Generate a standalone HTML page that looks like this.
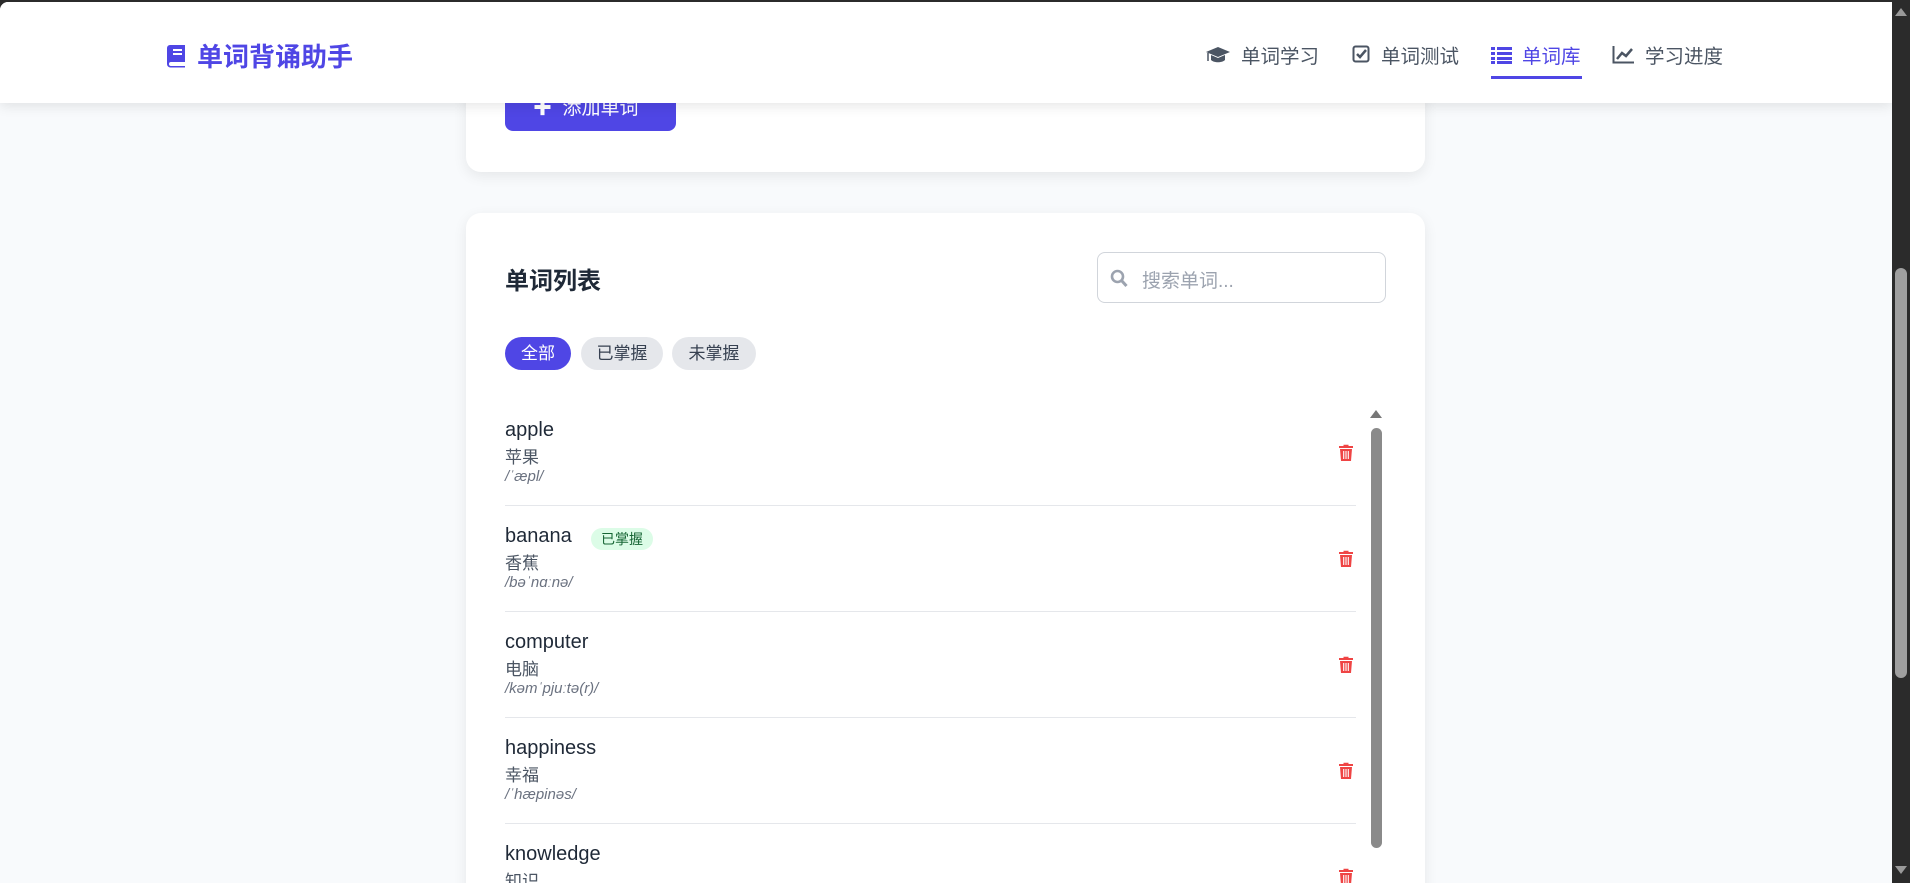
<!DOCTYPE html>
<html><head><meta charset="utf-8"><style>
*{box-sizing:border-box;margin:0;padding:0}
html,body{overflow:hidden}
body{width:1910px;height:883px;background:#2b2b2b;font-family:"Liberation Sans","Noto Sans CJK SC",sans-serif;position:relative}
#page{position:absolute;left:0;top:2px;width:1892px;height:881px;background:#f8fafc;overflow:hidden;border-top-left-radius:8px}
.abs{position:absolute}
.card{position:absolute;background:#fff;border-radius:15px;box-shadow:0 4px 14px rgba(0,0,0,0.08)}
header{position:absolute;left:0;top:0;width:1892px;height:101px;background:#fff;box-shadow:0 3px 12px rgba(0,0,0,0.1);z-index:5}
.logo{position:absolute;left:165px;top:35px;font-size:26px;font-weight:bold;color:#4f46e5;display:flex;align-items:center;gap:10px}
.nav{position:absolute;top:38px;font-size:19.5px;color:#4b5563;display:flex;align-items:center;gap:10px;white-space:nowrap}
.nav.active{color:#4f46e5}
.pill{position:absolute;top:335px;height:33px;border-radius:17px;font-size:17px;line-height:33px;text-align:center;color:#374151;background:#e5e7eb}
.row{position:absolute;left:505px;width:851px;height:106px;border-bottom:1px solid #e5e7eb}
.w{position:absolute;left:0;top:19px;font-size:20px;color:#1f2937}
.m{position:absolute;left:0;top:43px;font-size:17px;color:#4b5563}
.p{position:absolute;left:0;top:68px;font-size:15px;color:#6b7280;font-style:italic}
.tr{position:absolute;left:834px;top:44px}
</style></head><body>
<div id="page">
<header>
 <div class="logo"><svg width="22" height="24" viewBox="0 0 22 24"><path d="M5 1h15v17H6a2 2 0 0 0 0 4h14v1.5H5.5A3.5 3.5 0 0 1 2 20V4a3 3 0 0 1 3-3z" fill="#4f46e5"/><rect x="8" y="5" width="9" height="2" fill="#fff"/><rect x="8" y="9" width="9" height="2" fill="#fff"/></svg>单词背诵助手</div>
 <div class="nav" style="left:1205px"><svg width="26" height="20" viewBox="0 0 26 20"><path d="M13 2 1 7l12 5 12-5z" fill="#4b5563"/><path d="M6 10v5c3 3 11 3 14 0v-5l-7 3z" fill="#4b5563"/><path d="M3 8v8" stroke="#4b5563" stroke-width="1.5"/></svg>单词学习</div>
 <div class="nav" style="left:1352px"><svg width="19" height="19" viewBox="0 0 19 19"><rect x="1.5" y="1.5" width="15" height="15" rx="2" fill="none" stroke="#4b5563" stroke-width="2"/><path d="M5 9l3 3 6-7" fill="none" stroke="#4b5563" stroke-width="2.5"/></svg>单词测试</div>
 <div class="nav active" style="left:1491px"><svg width="21" height="18" viewBox="0 0 21 18"><g fill="#4f46e5"><rect x="0" y="1" width="4" height="3"/><rect x="6" y="1" width="15" height="3"/><rect x="0" y="6" width="4" height="3"/><rect x="6" y="6" width="15" height="3"/><rect x="0" y="11" width="4" height="3"/><rect x="6" y="11" width="15" height="3"/><rect x="0" y="15" width="4" height="3"/><rect x="6" y="15" width="15" height="3"/></g></svg>单词库</div>
 <div class="abs" style="left:1491px;top:74px;width:91px;height:3px;background:#4f46e5"></div>
 <div class="nav" style="left:1612px"><svg width="23" height="19" viewBox="0 0 23 19"><path d="M1.5 1v16.5H22" fill="none" stroke="#4b5563" stroke-width="2"/><path d="M5 14l5-6 4 3 6-7" fill="none" stroke="#4b5563" stroke-width="2.5"/></svg>学习进度</div>
</header>

<div class="card" style="left:466px;top:-40px;width:959px;height:210px">
 <div class="abs" style="left:39px;top:124px;width:171px;height:45px;background:#4f46e5;border-radius:8px;color:#fff;font-size:19px;line-height:45px;padding-left:28px">✚&nbsp;&nbsp;添加单词</div>
</div>

<div class="card" style="left:466px;top:211px;width:959px;height:720px">
 <div class="abs" style="left:39px;top:48px;font-size:24px;font-weight:bold;color:#1f2937">单词列表</div>
 <div class="abs" style="left:631px;top:39px;width:289px;height:51px;border:1px solid #d1d5db;border-radius:8px">
  <svg class="abs" style="left:12px;top:16px" width="18" height="19" viewBox="0 0 18 19"><circle cx="7.5" cy="7.5" r="5.5" fill="none" stroke="#9ca3af" stroke-width="2.6"/><path d="M11.5 11.5l5 5.5" stroke="#9ca3af" stroke-width="3"/></svg>
  <div class="abs" style="left:44px;top:13px;font-size:19px;color:#9ca3af">搜索单词...</div>
 </div>
</div>
<div class="pill" style="left:505px;width:66px;background:#4f46e5;color:#fff">全部</div>
<div class="pill" style="left:581px;width:82px">已掌握</div>
<div class="pill" style="left:672px;width:84px">未掌握</div>

<div class="abs" style="left:1370px;top:408px;width:0;height:0;border-left:6px solid transparent;border-right:6px solid transparent;border-bottom:8px solid #777"></div>
<div class="abs" style="left:1371px;top:426px;width:11px;height:420px;background:#8a8a8a;border-radius:6px"></div>

<div class="row" style="top:398px"><div class="w">apple</div><div class="m">苹果</div><div class="p">/ˈæpl/</div><svg class="tr" width="14" height="17" viewBox="0 0 14 17"><path d="M4.5 2V0.8h5V2H14v2H0V2z M1 5h12l-1 12H2z" fill="#ef4444"/><path d="M4.7 7v8M7 7v8M9.3 7v8" stroke="#fff" stroke-width="1.1"/></svg></div>
<div class="row" style="top:504px"><div class="w">banana</div><div class="abs" style="left:86px;top:22px;height:22px;padding:0 10px;background:#dcfce7;color:#166534;border-radius:11px;font-size:14px;line-height:22px">已掌握</div><div class="m">香蕉</div><div class="p">/bəˈnɑːnə/</div><svg class="tr" width="14" height="17" viewBox="0 0 14 17"><path d="M4.5 2V0.8h5V2H14v2H0V2z M1 5h12l-1 12H2z" fill="#ef4444"/><path d="M4.7 7v8M7 7v8M9.3 7v8" stroke="#fff" stroke-width="1.1"/></svg></div>
<div class="row" style="top:610px"><div class="w">computer</div><div class="m">电脑</div><div class="p">/kəmˈpjuːtə(r)/</div><svg class="tr" width="14" height="17" viewBox="0 0 14 17"><path d="M4.5 2V0.8h5V2H14v2H0V2z M1 5h12l-1 12H2z" fill="#ef4444"/><path d="M4.7 7v8M7 7v8M9.3 7v8" stroke="#fff" stroke-width="1.1"/></svg></div>
<div class="row" style="top:716px"><div class="w">happiness</div><div class="m">幸福</div><div class="p">/ˈhæpinəs/</div><svg class="tr" width="14" height="17" viewBox="0 0 14 17"><path d="M4.5 2V0.8h5V2H14v2H0V2z M1 5h12l-1 12H2z" fill="#ef4444"/><path d="M4.7 7v8M7 7v8M9.3 7v8" stroke="#fff" stroke-width="1.1"/></svg></div>
<div class="row" style="top:822px;height:58px;border-bottom:none"><div class="w">knowledge</div><div class="m">知识</div><svg class="tr" width="14" height="17" viewBox="0 0 14 17"><path d="M4.5 2V0.8h5V2H14v2H0V2z M1 5h12l-1 12H2z" fill="#ef4444"/><path d="M4.7 7v8M7 7v8M9.3 7v8" stroke="#fff" stroke-width="1.1"/></svg></div>
</div>
<div class="abs" style="left:1895px;top:8px;width:0;height:0;border-left:6px solid transparent;border-right:6px solid transparent;border-bottom:8px solid #999"></div>
<div class="abs" style="left:1895px;top:268px;width:12px;height:410px;background:#9f9f9f;border-radius:6px"></div>
<div class="abs" style="left:1895px;top:866px;width:0;height:0;border-left:6px solid transparent;border-right:6px solid transparent;border-top:8px solid #999"></div>
</body></html>
